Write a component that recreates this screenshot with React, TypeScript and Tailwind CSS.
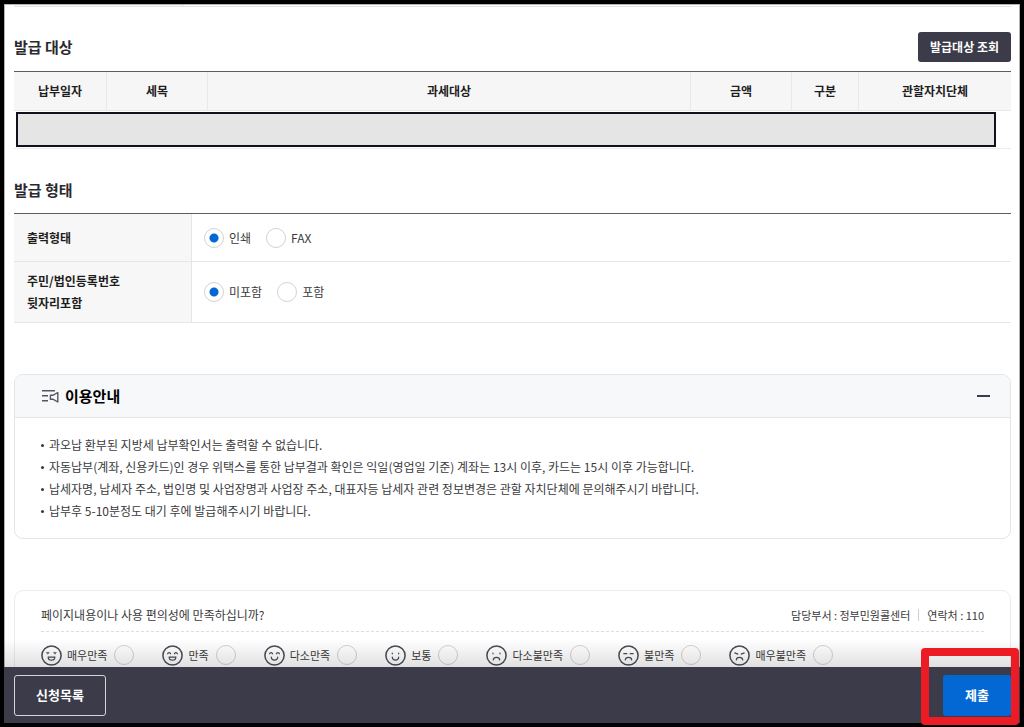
import { useState } from "react";

const columns = [
  { label: "납부일자", width: "w-[93px]" },
  { label: "세목", width: "w-[101px]" },
  { label: "과세대상", width: "" },
  { label: "금액", width: "w-[101px]" },
  { label: "구분", width: "w-[67px]" },
  { label: "관할자치단체", width: "w-[152px]" },
];

const notices = [
  "과오납 환부된 지방세 납부확인서는 출력할 수 없습니다.",
  "자동납부(계좌, 신용카드)인 경우 위택스를 통한 납부결과 확인은 익일(영업일 기준) 계좌는 13시 이후, 카드는 15시 이후 가능합니다.",
  "납세자명, 납세자 주소, 법인명 및 사업장명과 사업장 주소, 대표자등 납세자 관련 정보변경은 관할 자치단체에 문의해주시기 바랍니다.",
  "납부후 5-10분정도 대기 후에 발급해주시기 바랍니다.",
];

const ratings = [
  {
    label: "매우만족",
    face: (
      <>
        <path d="M5.6 7.4h2.6L6.900 9zM12.800 7.400h2.600L14.100 9z" fill="currentColor" strokeWidth="0.5" />
        <path d="M7.200 12.200h6.600c0 2-1.300 3-3.300 3s-3.300-1-3.300-3z" />
      </>
    ),
  },
  {
    label: "만족",
    face: (
      <>
        <path d="M5.600 8.800c.5-1.600 2.500-1.600 3 0M12.400 8.800c.5-1.600 2.500-1.600 3 0" />
        <path d="M7.200 12.200h6.600c0 2-1.300 3-3.300 3s-3.300-1-3.300-3z" />
      </>
    ),
  },
  {
    label: "다소만족",
    face: (
      <>
        <path d="M5.600 8.800c.5-1.600 2.500-1.600 3 0M12.400 8.800c.5-1.600 2.500-1.600 3 0" />
        <path d="M7.300 12.200c.2 3.900 6.200 3.900 6.400 0" />
      </>
    ),
  },
  {
    label: "보통",
    face: (
      <>
        <path d="M7.300 8v.8M13.700 8v.8" />
        <path d="M7.300 12.200c.2 3.900 6.200 3.900 6.400 0" />
      </>
    ),
  },
  {
    label: "다소불만족",
    face: (
      <>
        <path d="M7 8v.8M14 8v.8" />
        <path d="M7.300 15c.2-3.600 6.200-3.600 6.400 0" />
      </>
    ),
  },
  {
    label: "불만족",
    face: (
      <>
        <path d="M5.800 8.700h3M12.200 8.700h3" />
        <path d="M7.300 15c.2-3.600 6.200-3.600 6.400 0" />
      </>
    ),
  },
  {
    label: "매우불만족",
    face: (
      <>
        <path d="M5.800 7.900l3 1.200M15.200 7.900l-3 1.200" />
        <path d="M7.300 15c.2-3.600 6.200-3.600 6.400 0" />
      </>
    ),
  },
];

const radioClass =
  "size-5 shrink-0 appearance-none rounded-full border border-[#d2d2d4] checked:bg-[radial-gradient(circle,#0468d4_4px,transparent_5px)]";

function RadioGroup({ name, options }: { name: string; options: string[] }) {
  const [value, setValue] = useState(options[0]);
  return (
    <div className="flex items-center gap-[15px]">
      {options.map((option) => (
        <label key={option} className="flex items-center gap-[5px]">
          <input
            type="radio"
            name={name}
            checked={value === option}
            onChange={() => setValue(option)}
            className={radioClass}
          />
          {option}
        </label>
      ))}
    </div>
  );
}

function NoticeIcon() {
  return (
    <svg viewBox="0 0 17 14" className="h-[14px] w-[17px]" fill="none" stroke="#555564" strokeWidth="1.4" aria-hidden="true">
      <path d="M0 1.700h13M0 6.700h6M0 11.700h6" />
      <path d="M8.400 6.300h2.400L15.800 3.500v9.500l-5-2.800H8.400z" strokeLinejoin="round" />
    </svg>
  );
}

export default function App() {
  const [open, setOpen] = useState(true);
  return (
    <div className="flex h-screen flex-col border-4 border-black bg-white font-['Noto_Sans_CJK_KR',sans-serif] text-[12px] leading-[22px] text-[#3a3a3c]">
      <main className="min-h-0 flex-1 overflow-y-auto border border-b-0 border-[#b4b4b4] pr-2 pl-[9px] [scrollbar-width:none]">
        <div className="flex h-[2px] border-b border-[#e4e4e4]">
          <div className="w-[170px] border-r border-[#e4e4e4] bg-[#f7f7f7]" />
        </div>

        <section>
          <div className="flex items-center justify-between pt-[25px] pb-[9px]">
            <h2 className="text-[15px] font-bold text-[#2a2a2e]">발급 대상</h2>
            <button type="button" className="h-[30px] rounded-[3px] bg-[#3b3b4a] px-3 text-[12px] font-bold text-white">
              발급대상 조회
            </button>
          </div>
          <table className="w-full table-fixed border-separate border-spacing-0 border-t border-[#5c5c68]">
            <thead>
              <tr className="h-[39px] bg-[#f6f6f6]">
                {columns.map((c) => (
                  <th key={c.label} scope="col" className={`border-r border-b border-[#e8e8e8] p-0 font-bold text-[#1e1e20] last:border-r-0 ${c.width}`}>
                    {c.label}
                  </th>
                ))}
              </tr>
            </thead>
            <tbody>
              <tr>
                <td colSpan={6} className="border-b border-[#ececec] pt-px pr-[15px] pb-px pl-[2px]">
                  <div className="h-[35px] border-2 border-[#12121c] bg-[#e5e5e5]" />
                </td>
              </tr>
            </tbody>
          </table>
        </section>

        <section className="pt-[30px]">
          <h2 className="pb-3 text-[15px] font-bold text-[#2a2a2e]">발급 형태</h2>
          <table className="w-full border-separate border-spacing-0 border-t border-[#5c5c68]">
            <tbody>
              <tr className="h-12">
                <th scope="row" className="w-[178px] border-r border-b border-[#e6e6e6] bg-[#f7f7f7] px-[13px] text-left font-bold text-[#1e1e20]">
                  출력형태
                </th>
                <td className="border-b border-[#e6e6e6] px-3">
                  <RadioGroup name="output" options={["인쇄", "FAX"]} />
                </td>
              </tr>
              <tr className="h-[61px]">
                <th scope="row" className="border-r border-b border-[#e6e6e6] bg-[#f7f7f7] px-[13px] text-left font-bold text-[#1e1e20]">
                  주민/법인등록번호
                  <br />
                  뒷자리포함
                </th>
                <td className="border-b border-[#e6e6e6] px-3">
                  <RadioGroup name="number" options={["미포함", "포함"]} />
                </td>
              </tr>
            </tbody>
          </table>
        </section>

        <section className="mt-[51px] overflow-hidden rounded-[9px] border border-[#e4e5e7]">
          <h2>
            <button
              type="button"
              aria-expanded={open}
              onClick={() => setOpen(!open)}
              className="flex h-[43px] w-full items-center gap-[6px] border-b border-[#e4e5e7] bg-[#f7f8fa] pr-5 pb-px pl-[27px] text-[15px] font-bold text-black"
            >
              <NoticeIcon />
              <span>이용안내</span>
              <span className="ml-auto h-[2px] w-[13px] bg-[#3b3b4a]" />
            </button>
          </h2>
          {open && (
            <ul className="pt-4 pr-6 pb-4 pl-[26px]">
              {notices.map((n) => (
                <li key={n} className="flex items-center gap-[5px]">
                  <span className="size-[3px] shrink-0 rounded-full bg-[#3a3a3c]" />
                  {n}
                </li>
              ))}
            </ul>
          )}
        </section>

        <section className="mt-[51px] rounded-[9px] border border-[#ececee] px-[26px] pt-[13px] pb-6">
          <div className="flex items-center justify-between border-b border-dashed border-[#dedee0] pb-[5px]">
            <p>페이지내용이나 사용 편의성에 만족하십니까?</p>
            <div className="flex items-center gap-2 text-[11px]">
              <span>담당부서 : 정부민원콜센터</span>
              <span className="h-3 w-px bg-[#cfcfd2]" />
              <span>연락처 : 110</span>
            </div>
          </div>
          <div className="flex flex-wrap gap-x-7 gap-y-3 pt-3">
            {ratings.map((r) => (
              <label key={r.label} className="flex items-center text-[11px]">
                <svg viewBox="0 0 21 21" className="mr-[5px] size-[21px] text-[#4a4a58]" fill="none" stroke="currentColor" strokeWidth="1.2" strokeLinecap="round" aria-hidden="true">
                  <circle cx="10.500" cy="10.500" r="9.600" strokeWidth="1.500" />
                  {r.face}
                </svg>
                {r.label}
                <input type="radio" name="rating" className={`ml-[7px] ${radioClass}`} />
              </label>
            ))}
          </div>
        </section>
      </main>

      <footer className="relative flex h-14 shrink-0 items-center justify-between bg-[#3b3b4a] pr-[9px] pl-[10px]">
        <div className="pointer-events-none absolute inset-x-0 bottom-full h-7 bg-linear-to-b from-transparent to-black/12" />
        <button type="button" className="h-[41px] rounded-[3px] border border-[#d6d6da] px-[21px] text-[13px] font-bold text-white">
          신청목록
        </button>
        <button type="submit" className="h-[41px] rounded-[3px] bg-[#0468d4] px-[22px] text-[13px] font-bold text-white">
          제출
        </button>
        <div className="pointer-events-none absolute -top-[19px] right-px -bottom-[2px] w-[98px] rounded-[4px] border-8 border-[#ed1c24]" />
      </footer>
    </div>
  );
}
